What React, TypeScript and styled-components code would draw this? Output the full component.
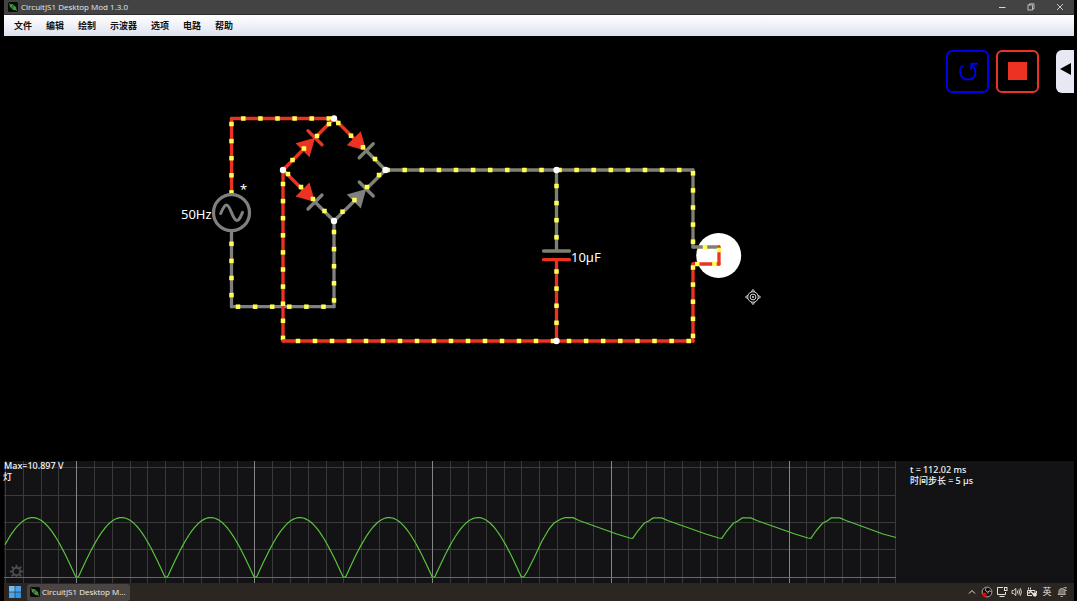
import React from 'react';
import styled, { createGlobalStyle } from 'styled-components';

const RED = '#ec3323';
const GREY = '#808080';
const WARM = '#808071';
const DOT = '#ffff54';
const STEP = 17.1;

const Global = createGlobalStyle`
  * { box-sizing: border-box; }
  html, body, #root { height: 100%; }
  body {
    margin: 0;
    background: #000;
    font-family: "Noto Sans", "Noto Sans CJK SC", sans-serif;
    overflow: hidden;
  }
  button { font: inherit; border: 0; padding: 0; background: none; cursor: pointer; }
`;

const Screen = styled.div`
  min-height: 100vh;
  padding: 0 3px 0 4px;
  display: flex;
  flex-direction: column;
  background: #000;
`;

const TitleBar = styled.header`
  height: 15px;
  flex: none;
  display: flex;
  align-items: center;
  padding: 0 8px 1px 4px;
  gap: 3px;
  background: #434343;
  border-bottom: 1px solid #2e2e30;
  color: #e8e8e8;
`;

const AppTitle = styled.h1`
  margin: 0;
  flex: 1;
  font-family: "Open Sans", sans-serif;
  font-size: 8px;
  line-height: 12px;
  font-weight: 400;
  white-space: nowrap;
`;

const WindowButtons = styled.div`
  display: flex;
  gap: 17px;
`;

const WindowButton = styled.button`
  width: 12px;
  height: 12px;
  color: #d6d6d6;
  display: flex;
  align-items: center;
  justify-content: center;
`;

const MenuBar = styled.nav`
  height: 21px;
  flex: none;
  display: flex;
  align-items: center;
  padding: 1px 3px 0;
  background: linear-gradient(#ffffff, #f0f1f8 50%, #dde1ee);
`;

const MenuItem = styled.button`
  padding: 0 7px;
  font-size: 9px;
  line-height: 16px;
  font-weight: 700;
  color: #111;
`;

const Workspace = styled.main`
  position: relative;
  flex: 1;
  min-height: 320px;
  display: flex;
`;

const Drawing = styled.svg`
  flex: 1;
  width: 100%;
  min-width: 0;
  display: block;
  overflow: visible;
`;

const Controls = styled.div`
  position: absolute;
  top: 14px;
  right: 0;
  display: flex;
  gap: 7px;
`;

const RunButton = styled.button<{ $color: string }>`
  width: 43px;
  height: 43px;
  border: 2px solid ${(p) => p.$color};
  border-radius: 6px;
  color: ${(p) => p.$color};
  display: flex;
  align-items: center;
  justify-content: center;
`;

const PanelHandle = styled.button`
  width: 18px;
  height: 43px;
  margin-left: 10px;
  padding-bottom: 5px;
  border-radius: 6px 0 0 6px;
  background: #e6e8f3;
  display: flex;
  align-items: center;
  justify-content: center;
`;

const Scope = styled.section`
  height: 122px;
  flex: none;
  display: flex;
  background: #131315;
`;

const ScopeInfo = styled.dl`
  width: 178px;
  flex: none;
  margin: 0;
  padding: 3px 0 0 14px;
  color: #f4f4f4;
  font-size: 9px;
  font-weight: 500;
  line-height: 11px;
`;

const InfoRow = styled.div`
  display: flex;
  gap: 2px;
  dt, dd { margin: 0; }
`;

const Taskbar = styled.footer`
  height: 18px;
  flex: none;
  display: flex;
  align-items: center;
  padding: 0 6px 0 5px;
  background: #2b2621;
`;

const StartButton = styled.button`
  width: 12px;
  height: 12px;
  margin-right: 6px;
  display: flex;
`;

const TaskButton = styled.button`
  height: 17px;
  padding: 0 4px 0 3px;
  display: flex;
  align-items: center;
  gap: 2px;
  border-radius: 3px;
  background: #4a4542;
  color: #f2f2f2;
  font-family: "Open Sans", sans-serif;
  font-size: 8px;
  line-height: 12px;
  white-space: nowrap;
`;

const Tray = styled.div`
  margin-left: auto;
  display: flex;
  gap: 3px;
`;

const TrayButton = styled.button`
  width: 12px;
  height: 12px;
  color: #e4e2e0;
  font-size: 9px;
  line-height: 12px;
  display: flex;
  align-items: center;
  justify-content: center;
`;

function AppIcon() {
  return (
    <svg width="10" height="10" viewBox="0 0 10 10" aria-hidden="true">
      <rect width="10" height="10" rx="1.5" fill="#070a07" />
      <path d="M1 1.5 3 3.2M7.2 7 9 8.8" stroke="#5fae55" strokeWidth="0.8" />
      <path d="M1.6 2.2 4.4 1.9 8.2 5.2 8.4 8.2 5.4 8 1.8 4.7z" fill="#43963d" />
      <path d="M4.6 3v3.4M3.4 5.2 6.4 4.6" stroke="#1d4c1a" strokeWidth="0.5" />
    </svg>
  );
}

type Point = [number, number];

function Line({ from, to, color }: { from: Point; to: Point; color: string }) {
  return <line x1={from[0]} y1={from[1]} x2={to[0]} y2={to[1]} stroke={color} strokeWidth="3.3" strokeLinecap="round" />;
}

function Charge({ x, y }: { x: number; y: number }) {
  return <rect x={x - 2.25} y={y - 2.25} width="4.5" height="4.5" fill={DOT} />;
}

type WireProps = { from: Point; to: Point; color: string; first: number; count: number; step?: number };

// A straight wire; `first` is the coordinate of the first charge along its axis.
function Wire({ from, to, color, first, count, step = STEP }: WireProps) {
  const horizontal = from[1] === to[1];
  return (
    <g>
      <Line from={from} to={to} color={color} />
      {Array.from({ length: count }, (_, i) => {
        const at = first + i * step;
        return <Charge key={i} x={horizontal ? at : from[0]} y={horizontal ? from[1] : at} />;
      })}
    </g>
  );
}

type DiodeProps = { from: Point; to: Point; anode: string; cathode: string; charges: Point[] };

function Diode({ from, to, anode, cathode, charges }: DiodeProps) {
  const cx = (from[0] + to[0]) / 2;
  const cy = (from[1] + to[1]) / 2;
  const sy = Math.sign(to[1] - from[1]);
  const base: Point = [cx - 6, cy - 6 * sy];
  const tip: Point = [cx + 6.5, cy + 6.5 * sy];
  return (
    <g>
      <Line from={from} to={base} color={anode} />
      <Line from={tip} to={to} color={cathode} />
      <polygon
        points={`${base[0] - 7},${base[1] + 7 * sy} ${base[0] + 7},${base[1] - 7 * sy} ${tip[0]},${tip[1]}`}
        fill={anode}
      />
      <Line from={[tip[0] - 7, tip[1] + 7 * sy]} to={[tip[0] + 7, tip[1] - 7 * sy]} color={cathode} />
      {charges.map(([x, y]) => <Charge key={x} x={x} y={y} />)}
    </g>
  );
}

const TOP: Point = [330, 82.5];
const LEFT: Point = [279, 134];
const RIGHT: Point = [381.5, 134];
const BOTTOM: Point = [330, 185];
const CAP_TOP: Point = [552.5, 134];
const CAP_BOTTOM: Point = [552.5, 305];

function Circuit() {
  return (
    <Drawing role="img" aria-label="Bridge rectifier circuit" fontSize="13" fill="#fff">
      <Wire from={[227.5, 82.5]} to={TOP} color={RED} first={239.3} count={6} />
      <Wire from={[227.5, 82.5]} to={[227.5, 157]} color={RED} first={88} count={5} />
      <Wire from={[227.5, 196]} to={[227.5, 270.7]} color={GREY} first={207.8} count={4} />
      <Wire from={[227.5, 270.7]} to={[330, 270.7]} color={GREY} first={234} count={6} />
      <Wire from={BOTTOM} to={[330, 270.7]} color={GREY} first={196} count={5} />
      <Wire from={LEFT} to={[279, 305]} color={RED} first={148} count={10} />
      <Wire from={[279, 305]} to={CAP_BOTTOM} color={RED} first={294} count={16} step={17} />
      <Wire from={CAP_BOTTOM} to={[689, 305]} color={RED} first={565} count={8} />
      <Wire from={RIGHT} to={CAP_TOP} color={WARM} first={383.6} count={10} />
      <Wire from={CAP_TOP} to={[689, 134]} color={WARM} first={555.5} count={8} />
      <Wire from={CAP_TOP} to={[552.5, 214]} color={WARM} first={150} count={4} />
      <Wire from={[552.5, 225]} to={CAP_BOTTOM} color={RED} first={235.5} count={4} />

      <Diode from={LEFT} to={TOP} anode={RED} cathode={RED} charges={[[288.5, 124], [300, 112.5], [313, 100], [325, 88]]} />
      <Diode from={TOP} to={RIGHT} anode={RED} cathode="#7d8272" charges={[[334.3, 87], [347, 99.7], [359, 111.3], [371, 123]]} />
      <Diode from={LEFT} to={BOTTOM} anode={RED} cathode={GREY} charges={[[284, 138], [297, 151], [309, 163], [320.5, 175]]} />
      <Diode from={BOTTOM} to={RIGHT} anode={GREY} cathode="#7d8477" charges={[[338.5, 175.7], [350.5, 164], [363, 151], [375, 139]]} />

      <circle cx="227.5" cy="176.7" r="18" fill="none" stroke={GREY} strokeWidth="3.2" />
      <path
        d="M216.7 177.5C219 172 221 169 222.5 169 226.5 169 228.5 184.5 233 184.5 235 184.5 236.5 181 238.5 176.3"
        fill="none"
        stroke={GREY}
        strokeWidth="3"
        strokeLinecap="round"
      />
      <text x="177" y="183">50Hz</text>
      <text x="236" y="158">*</text>

      <Line from={[539.500, 215]} to={[565.500, 215]} color={WARM} />
      <Line from={[539.500, 223.7]} to={[565.500, 223.7]} color={RED} />
      <text x="567" y="226">10µF</text>

      <circle cx="714.7" cy="219.5" r="22.5" />
      <Wire from={[689, 134]} to={[689, 211]} color={WARM} first={137.3} count={5} />
      <Wire from={[689, 211]} to={[715, 211]} color={WARM} first={701} count={1} />
      <Wire from={[715, 211]} to={[715, 228]} color={RED} first={214} count={1} />
      <Wire from={[689, 228]} to={[715, 228]} color={RED} first={693.3} count={2} />
      <Wire from={[689, 228]} to={[689, 305]} color={RED} first={231.5} count={5} />

      {[TOP, LEFT, RIGHT, BOTTOM, CAP_TOP, CAP_BOTTOM].map(([x, y]) => (
        <circle key={`${x}-${y}`} cx={x} cy={y} r="3.2" />
      ))}

      <g transform="translate(749 261)" fill="none" stroke="#d8d8d8" strokeWidth="1">
        <circle r="5.3" />
        <circle r="2.9" />
        <circle r="0.6" fill="#fff" />
        <path d="M-1.8-5.2 0-7.6 1.8-5.2M-1.8 5.2 0 7.6 1.8 5.2M-5.2-1.8-7.6 0-5.2 1.8M5.2-1.8 7.6 0 5.2 1.8" />
      </g>
    </Drawing>
  );
}

function tracePath() {
  const points: string[] = [];
  for (let x = 1; x < 519; x += 1) {
    const v = Math.abs(Math.sin(((x + 16) / 89.1) * Math.PI));
    points.push(`${x},${Math.min(116, 118.8 - 62.2 * v).toFixed(1)}`);
  }
  points.push('520,115.5', '523,111', '530,97', '538,80', '545,68', '550,62', '557,58', '561,56.7', '569,56.7', '575,59.5', '582,62');
  [628.7, 717.8, 806.9].forEach((x) => {
    points.push(`${x - 16},73`, `${x - 3},77`, `${x},77.3`, `${x + 5},70`, `${x + 11.5},62.3`, `${x + 16},60`);
    points.push(`${x + 20.5},56.9`, `${x + 29},56.9`, `${x + 35},59.5`, `${x + 42},62`);
  });
  points.push('879,73', '892,76.5');
  return points.join(' ');
}

function ScopePlot() {
  return (
    <Drawing role="img" aria-label="Lamp voltage" fontSize="9" fontWeight="500" fill="#f8f8f8">
      {[6, 34, 61, 88].map((y) => (
        <line key={y} x1="0" x2="892" y1={y + 0.5} y2={y + 0.5} stroke="#3b3b3c" />
      ))}
      {Array.from({ length: 51 }, (_, i) => {
        const x = Math.round(1 + i * 17.81) + 0.5;
        return <line key={i} x1={x} x2={x} y1="0" y2="122" stroke={i % 10 === 4 ? '#858585' : '#39393a'} />;
      })}
      <line x1="0" x2="892" y1="116.5" y2="116.5" stroke="#6a6a6a" />
      <polyline points={tracePath()} fill="none" stroke="#59c43e" strokeWidth="1.2" />
      <g transform="translate(12.5 110.5)" fill="none" stroke="#4c4c4d" strokeWidth="1.9">
        <circle r="3.7" />
        {[0, 45, 90, 135, 180, 225, 270, 315].map((a) => (
          <path key={a} d="M0-4V-6.700" transform={`rotate(${a})`} />
        ))}
      </g>
      <text x="0" y="8">Max=10.897 V</text>
      <text x="-1" y="19">灯</text>
    </Drawing>
  );
}

const MENUS = ['文件', '编辑', '绘制', '示波器', '选项', '电路', '帮助'];

export default function App() {
  return (
    <>
      <Global />
      <Screen>
        <TitleBar>
          <AppIcon />
          <AppTitle>CircuitJS1 Desktop Mod 1.3.0</AppTitle>
          <WindowButtons>
            <WindowButton aria-label="Minimize">
              <svg width="8" height="8"><path d="M1 4.500h6.500" stroke="currentColor" /></svg>
            </WindowButton>
            <WindowButton aria-label="Restore">
              <svg width="8" height="8" fill="none" stroke="currentColor" strokeWidth="0.8">
                <rect x="1" y="2" width="4.500" height="5" />
                <path d="M2.500 2V.8H7v5H5.500" />
              </svg>
            </WindowButton>
            <WindowButton aria-label="Close">
              <svg width="8" height="8"><path d="M1 1l6 6M7 1L1 7" stroke="currentColor" strokeWidth="0.9" /></svg>
            </WindowButton>
          </WindowButtons>
        </TitleBar>
        <MenuBar>
          {MENUS.map((label) => <MenuItem key={label}>{label}</MenuItem>)}
        </MenuBar>
        <Workspace>
          <Circuit />
          <Controls>
            <RunButton $color="#0000f0" aria-label="Reset">
              <svg width="22" height="22" fill="none" stroke="currentColor" strokeWidth="1.9">
                <path d="M6 4.500C1.500 7.500 2 18.500 11 18.500 19.500 18.500 20.500 9 14.500 3.500" />
                <path d="M21 2.800H14.300V9" />
              </svg>
            </RunButton>
            <RunButton $color={RED} aria-label="Stop">
              <svg width="19" height="19"><rect width="19" height="18" fill="currentColor" /></svg>
            </RunButton>
            <PanelHandle aria-label="Open side panel">
              <svg width="11" height="12"><path d="M0 6 11 0v12z" fill="#000" /></svg>
            </PanelHandle>
          </Controls>
        </Workspace>
        <Scope>
          <ScopePlot />
          <ScopeInfo>
            <InfoRow><dt>t =</dt><dd>112.02 ms</dd></InfoRow>
            <InfoRow><dt>时间步长 =</dt><dd>5 µs</dd></InfoRow>
          </ScopeInfo>
        </Scope>
        <Taskbar>
          <StartButton aria-label="Start">
            <svg width="12" height="12" fill="#4da3e8">
              <rect width="5.700" height="5.700" fill="#74bdf2" />
              <rect x="6.300" width="5.700" height="5.700" />
              <rect y="6.300" width="5.700" height="5.700" />
              <rect x="6.300" y="6.300" width="5.700" height="5.700" fill="#3690df" />
            </svg>
          </StartButton>
          <TaskButton>
            <AppIcon />
            CircuitJS1 Desktop M...
          </TaskButton>
          <Tray>
            <TrayButton aria-label="Show hidden icons">
              <svg width="8" height="8"><path d="M1 5.500 4 2.500 7 5.500" fill="none" stroke="currentColor" /></svg>
            </TrayButton>
            <TrayButton aria-label="Recorder">
              <svg width="12" height="12" viewBox="0 0 12 12">
                <circle cx="6" cy="6" r="4.900" fill="#0c0c0c" stroke="#c9c9c9" strokeWidth="0.8" />
                <path d="M5 2.300C3.700 4 5 5.600 6.300 5.600M9.800 5.500C8 4.200 6.300 5.500 7 7.500" fill="none" stroke="#d0d0d0" strokeWidth="1" />
                <circle cx="3.500" cy="8.700" r="2.200" fill="#f00000" />
              </svg>
            </TrayButton>
            <TrayButton aria-label="Network">
              <svg width="12" height="12" fill="none" stroke="currentColor">
                <path d="M7 1.500H1.500v7h8V6M3.500 10.500h5" />
                <rect x="8.500" y="1.500" width="2.500" height="3" />
              </svg>
            </TrayButton>
            <TrayButton aria-label="Volume">
              <svg width="12" height="12" fill="none" stroke="currentColor" strokeWidth="0.9">
                <path d="M1 4.500h1.500L4.800 2.500v7L2.500 7.500H1z" />
                <path d="M6.300 4.500q1 1.500 0 3M7.800 3.300q1.800 2.700 0 5.400M9.300 2.200q2.200 3.800 0 7.600" />
              </svg>
            </TrayButton>
            <TrayButton aria-label="Battery">
              <svg width="12" height="12" fill="none" stroke="currentColor">
                <path d="M1.500 4.500h7.500v2M1.500 4.500v5H6" />
                <path d="M2.500 7.500 4.500 5.500 8 8.500" strokeWidth="1.500" />
                <path d="M2.500 1.500v2M4.500 1.500v2M10.500 5v2" />
                <circle cx="8.800" cy="8.500" r="1.700" fill="currentColor" />
              </svg>
            </TrayButton>
            <TrayButton aria-label="Input language">英</TrayButton>
            <TrayButton aria-label="Notifications">
              <svg width="12" height="12" fill="none" stroke="#a9a6a2">
                <path d="M2 8.500h7.500L8.800 7V4.500Q8.500 2.500 6 2.500T3 4.500V7zM4.500 10.500h2.500" fill="#77736f" />
                <path d="M7.500 1.500h3L8 4.500h3" strokeWidth="0.9" />
              </svg>
            </TrayButton>
          </Tray>
        </Taskbar>
      </Screen>
    </>
  );
}
